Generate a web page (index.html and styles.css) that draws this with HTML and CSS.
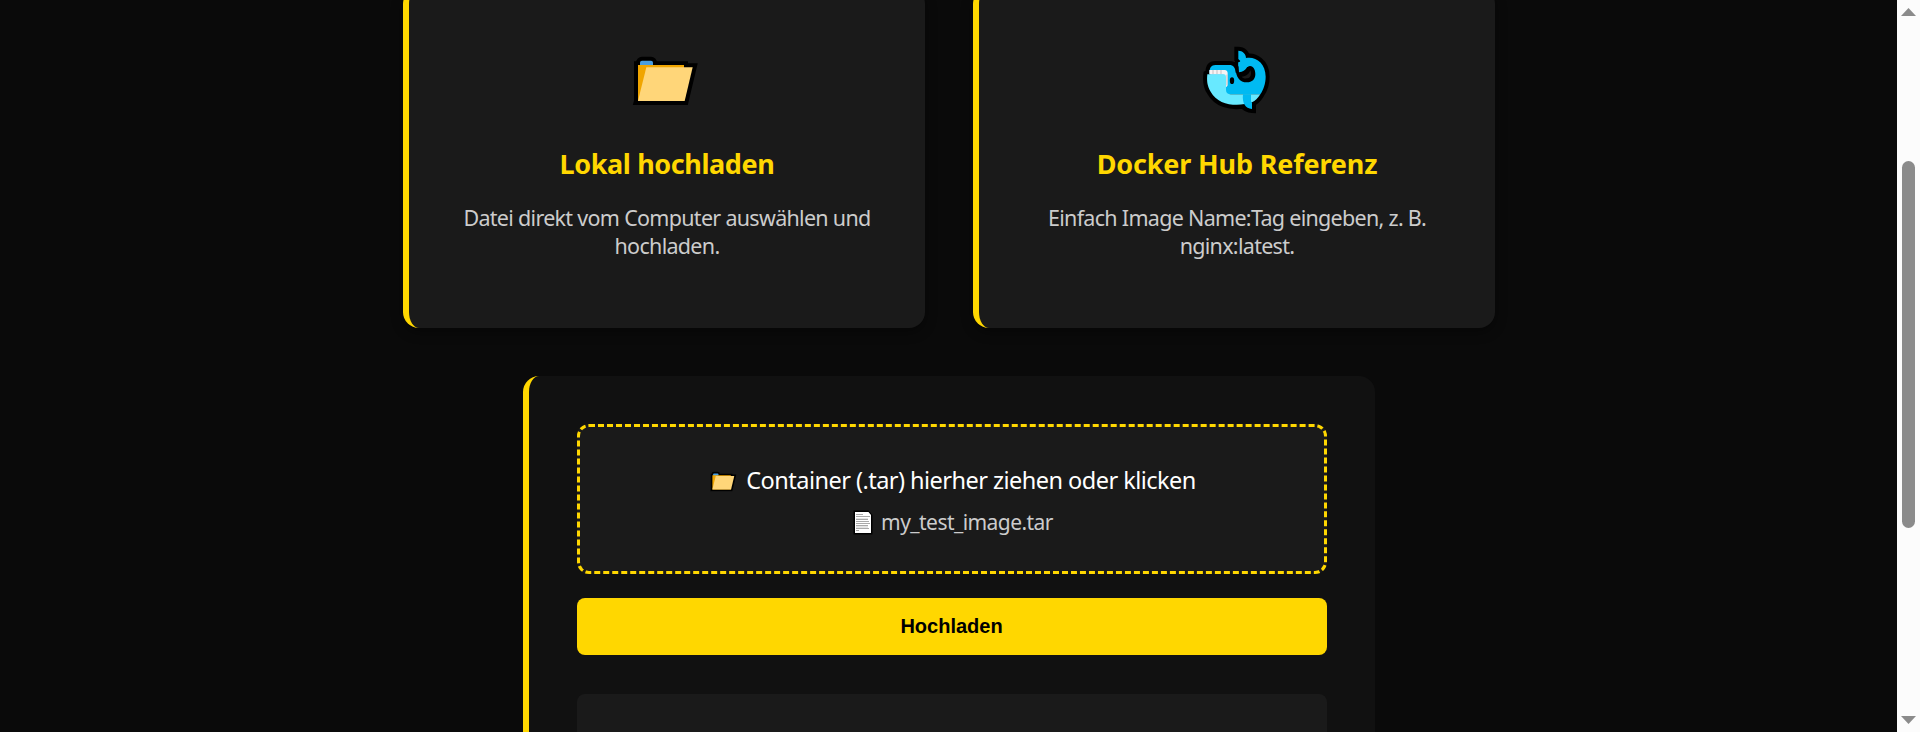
FILE: index.html
```html
<!DOCTYPE html>
<html lang="de">
<head>
<meta charset="utf-8">
<title>Container hochladen</title>
<link rel="stylesheet" href="styles.css">
</head>
<body>
<svg width="0" height="0" class="defs">
  <symbol id="folder" viewBox="36 45 210 155">
    <g stroke="#000" stroke-width="24" fill="#000">
      <rect x="60" y="62" width="39" height="30" rx="6"/>
      <path d="M54 76H192V183H54ZM80 82H218L194 183H54Z"/>
    </g>
    <rect x="60" y="62" width="39" height="24" rx="6" fill="#4a9ee0"/>
    <path d="M54 75H192V183H54Z" fill="#f0a500"/>
    <path d="M79 82H218L194 183H54Z" fill="#ffd679"/>
  </symbol>
</svg>
<div class="window">
  <main class="page">
    <section class="cards">
      <article class="card">
        <svg class="card-icon" viewBox="36 0 210 240"><use href="#folder" x="36" y="45" width="210" height="155"/></svg>
        <h2 class="card-title title-local">Lokal hochladen</h2>
        <p class="card-text">Datei direkt vom Computer auswählen und<br>hochladen.</p>
      </article>
      <article class="card">
        <svg class="card-icon" viewBox="36 0 210 240">
          <path stroke="#000" stroke-width="24" d="M145 32C158 32 168 42 168 54C195 48 227 68 227 110C227 130 220 150 211 163C203 176 196 183 186 187V207C172 206 165 200 160 194C120 200 82 190 62 155C51 140 50 120 52 103L58 100C58 83 64 75 76 75H118C130 75 138 83 138 98L146 92V70L151 63L145 57Z"/>
          <path fill="#00baf2" d="M145 32C158 32 168 42 168 54C195 48 227 68 227 110C227 130 220 150 211 163H110L58 100C58 83 64 75 76 75H118C130 75 136 83 137 98L145 98V70L151 63L145 57Z"/>
          <path fill="#68e9ff" d="M52 103H108V150C108 159 114 163 122 163H211C203 176 196 182 186 187C145 201 85 198 62 155C51 138 50 120 52 103Z"/>
          <path fill="#00baf2" d="M159 163H183V184L186 188V207C166 206 156 190 159 163Z"/>
          <path fill="#f5f2f3" d="M58 90H104C110 90 113 94 113 100V134C113 138 108 141 108 141V111C108 105 105 103 100 103H58Z"/>
          <path stroke="#c4bfc1" stroke-width="3" d="M69 90V102M81 90V102M93 90V102M111 104V136"/>
          <path d="M137 83C144 88 143 84 143 79L173 81C182 73 196 82 196 102C196 118 186 127 171 127C149 127 137 111 137 83Z"/>
          <path fill="#00baf2" d="M145 66H178C173 77 171 93 147 97Z"/>
          <path fill="#1b1b1b" d="M155 110C169 109 176 103 181 91C185 98 184 114 172 115C163 116 158 114 155 110Z"/>
          <ellipse cx="126" cy="122" rx="6.5" ry="10"/>
        </svg>
        <h2 class="card-title title-hub">Docker Hub Referenz</h2>
        <p class="card-text">Einfach Image Name:Tag eingeben, z. B.<br>nginx:latest.</p>
      </article>
    </section>
    <section class="panel">
      <div class="dropzone">
        <div class="drop-line"><svg class="folder-small" viewBox="36 45 210 155"><use href="#folder" x="36" y="45" width="210" height="155"/></svg><span class="drop-label">Container (.tar) hierher ziehen oder klicken</span></div>
        <div class="file-line"><svg class="file-icon" viewBox="0 0 20 25">
          <path d="M.5.5H15.5L19.5 5V24.5H.5Z"/>
          <path fill="#fff" d="M2 2H15.5L18 5V23H2Z"/>
          <path fill="#e4e4e4" d="M3 8H15V10H3ZM3 15H15V18H3Z"/>
          <path stroke="#a9a9a9" d="M3 4.500H10M3 6.500H17M3 9.500H15M3 11.500H16M3 13.500H17M3 15.500H15M3 18.500H16M3 20.500H6"/>
        </svg><span class="file-name">my_test_image.tar</span></div>
      </div>
      <button class="upload">Hochladen</button>
      <div class="result"></div>
    </section>
  </main>
  <aside class="scrollbar">
    <svg class="arrow" viewBox="0 0 15 8"><path d="M7.500 0L15 8H0Z"/></svg>
    <div class="thumb"></div>
    <svg class="arrow arrow-down" viewBox="0 0 15 8"><path d="M0 0H15L7.500 8Z"/></svg>
  </aside>
</div>
</body>
</html>
```
FILE: styles.css
```css
* { box-sizing: border-box; }
body { margin: 0; background: #0a0a0a; font-family: "Noto Sans", "Open Sans", sans-serif; }
.defs { display: block; }
.window { display: flex; height: 732px; overflow: hidden; }
.page { flex: 1; height: 732px; overflow: hidden; display: flex; flex-direction: column; align-items: center; padding-left: 1px; }
.cards { display: flex; gap: 48px; margin-top: -12px; }
.card {
  width: 522px; height: 340px; padding-top: 52px; flex: none;
  display: flex; flex-direction: column; align-items: center;
  background: #1a1a1a; border-left: 6px solid gold; border-radius: 16px;
  box-shadow: 0 4px 12px rgba(0, 0, 0, .4);
}
.card-icon { width: 70px; height: 80px; display: block; }
.card-title { margin: 24px 0 0; font-size: 27px; line-height: 40px; font-weight: 700; color: gold; white-space: nowrap; }
.title-local { letter-spacing: -.4px; }
.title-hub { letter-spacing: -.16px; }
.card-text { margin: 20px 0 0; font-size: 21.5px; line-height: 28px; letter-spacing: -.7px; color: #ccc; text-align: center; white-space: nowrap; }
.panel {
  width: 852px; height: 500px; flex: none; margin-top: 48px; padding: 48px;
  background: #111; border-left: 6px solid gold; border-radius: 16px;
}
.dropzone {
  height: 150px; border: 3px dashed gold; border-radius: 12px; background: #1a1a1a;
  padding: 33px 0 0 2px; white-space: nowrap;
}
.drop-line, .file-line { display: flex; align-items: center; justify-content: center; }
.drop-line { height: 40px; color: #fff; font-size: 23.5px; letter-spacing: -.53px; gap: 8px; }
.file-line { height: 44px; color: #ccc; font-size: 21px; letter-spacing: -.56px; gap: 8px; }
.folder-small { width: 28px; height: 21px; margin-top: 2px; }
.file-icon { width: 20px; height: 25px; }
.upload {
  display: block; width: 100%; height: 57px; margin: 24px 0 39px; padding: 0 1px 0 0; border: 0;
  border-radius: 8px; background: gold; color: #000; font: 700 20px "Liberation Sans", sans-serif;
}
.result { height: 200px; border-radius: 8px; background: #1a1a1a; }
.scrollbar { width: 23px; padding: 8px 4px; background: #fcfcfc; display: flex; flex-direction: column; align-items: center; }
.arrow { width: 15px; height: 8px; fill: #8b8b8b; }
.arrow-down { margin-top: auto; }
.thumb { width: 13px; height: 367px; margin-top: 145px; border-radius: 7px; background: #8b8b8b; }
```
